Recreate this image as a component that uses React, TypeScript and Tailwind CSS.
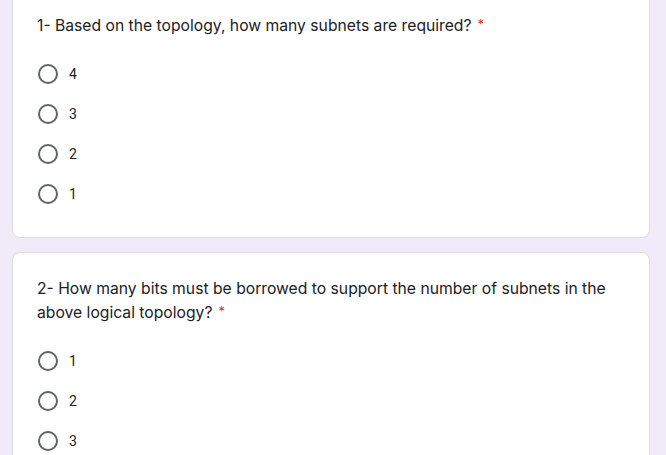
import React from "react";

type Question = {
  title: string;
  options: string[];
};

const questions: Question[] = [
  { title: "1- Based on the topology, how many subnets are required?", options: ["4", "3", "2", "1"] },
  {
    title: "2- How many bits must be borrowed to support the number of subnets in the above logical topology?",
    options: ["1", "2", "3"],
  },
];

function Radio({ label }: { label: string }) {
  return (
    <label className="flex h-10 items-center">
      <span className="ml-[1px] h-5 w-5 rounded-full border-2 border-[#5f6368]" />
      <span className="ml-[11px] text-[14px] text-[#202124] [font-family:Roboto,sans-serif]">{label}</span>
    </label>
  );
}

function QuestionCard({ q, first }: { q: Question; first?: boolean }) {
  return (
    <div
      className={`rounded-lg border border-[#dadce0] bg-white px-6 pt-6 pb-[23px] ${first ? "-mt-[11px]" : "mt-[14px]"}`}
    >
      <div className="text-[15.7px] leading-6 font-normal text-[#202124] [font-family:Inter,sans-serif]">
        {q.title}
        <span className="ml-[6px] align-top text-[13px] leading-5 text-[#d93025]">*</span>
      </div>
      <div className="mt-4 flex flex-col">
        {q.options.map((o) => (
          <Radio key={o} label={o} />
        ))}
      </div>
    </div>
  );
}

export default function App() {
  return (
    <div className="h-[455px] w-[666px] overflow-hidden bg-[#f0ebf8]">
      <div className="ml-3 mr-4">
        {questions.map((q, i) => (
          <QuestionCard key={i} q={q} first={i === 0} />
        ))}
      </div>
    </div>
  );
}
